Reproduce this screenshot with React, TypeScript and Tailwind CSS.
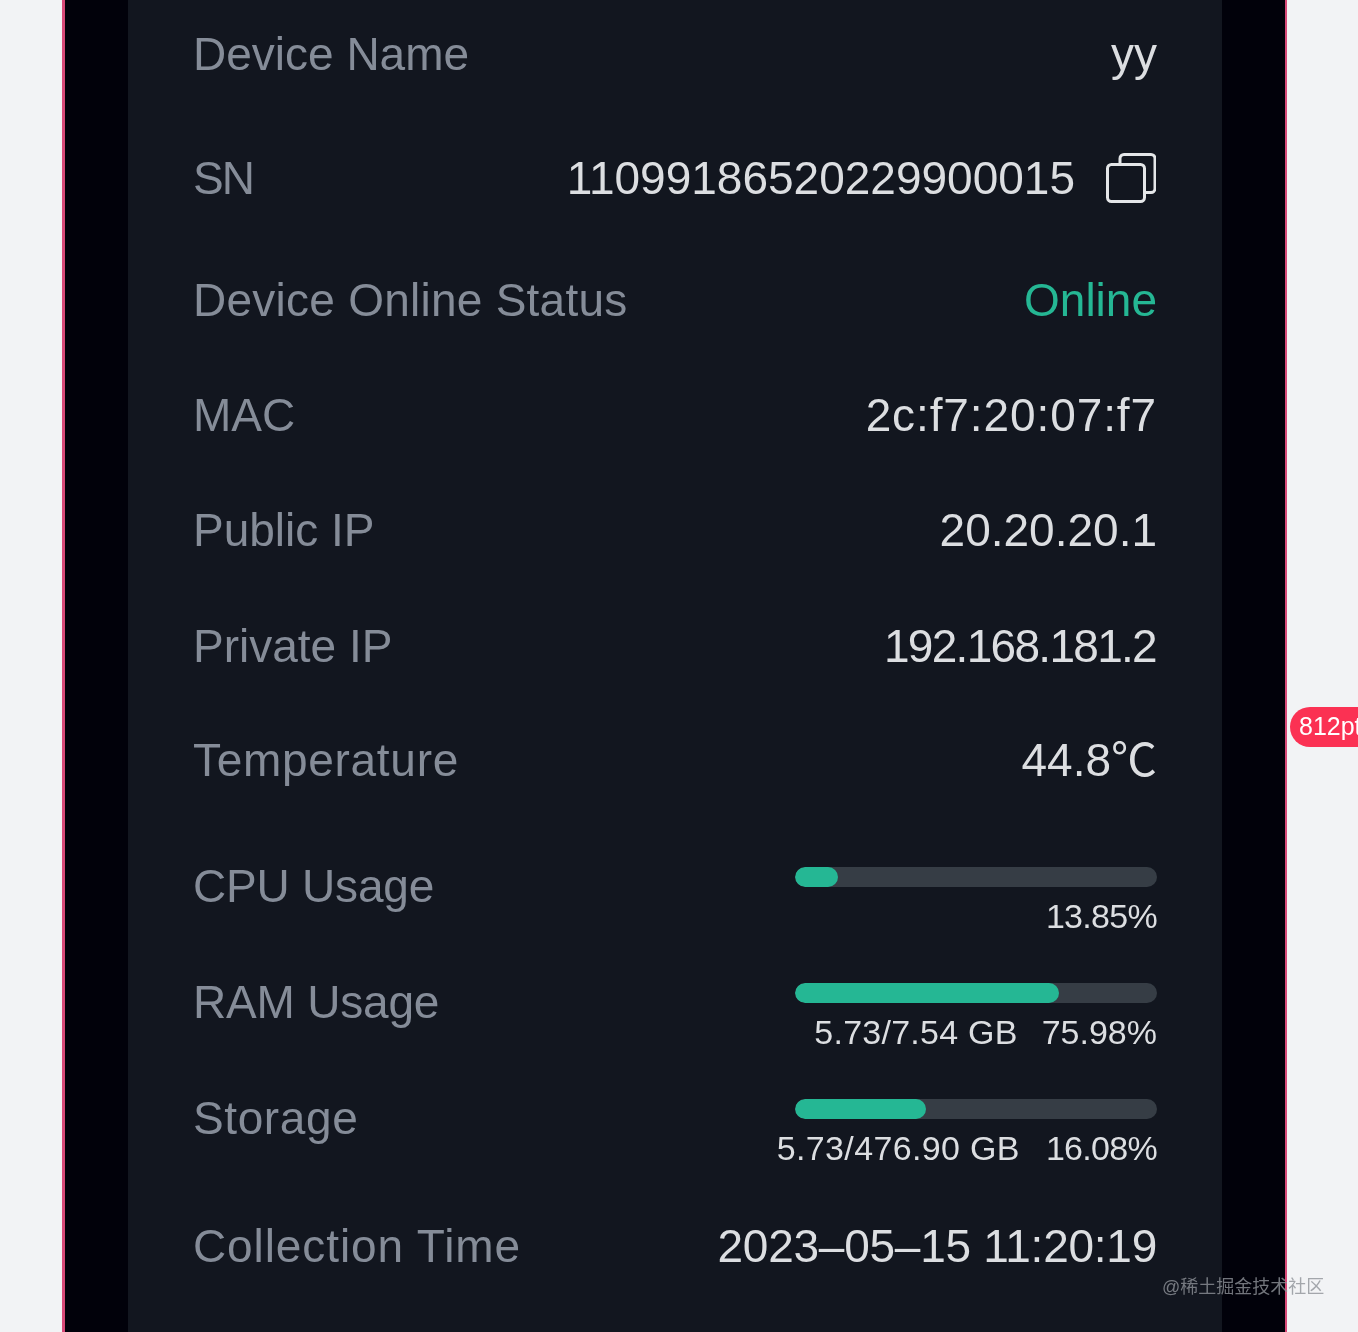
const font = "font-['Liberation_Sans','Noto_Sans_CJK_SC',sans-serif]";

type Row = {
  label: string;
  value: string;
  height: string;
  labelClass?: string;
  valueClass?: string;
  copy?: boolean;
};

const topRows: Row[] = [
  { label: "Device Name", value: "yy", height: "h-[108px]" },
  { label: "SN", value: "11099186520229900015", height: "h-[140px]", labelClass: "tracking-[-2px]", copy: true },
  {
    label: "Device Online Status",
    value: "Online",
    height: "h-[104px]",
    labelClass: "tracking-[0.25px]",
    valueClass: "!text-[#25b794]",
  },
  { label: "MAC", value: "2c:f7:20:07:f7", height: "h-[126px]", valueClass: "tracking-[0.9px]" },
  { label: "Public IP", value: "20.20.20.1", height: "h-[104px]" },
  { label: "Private IP", value: "192.168.181.2", height: "h-[128px]", valueClass: "mr-[1px] tracking-[-1.7px]" },
  { label: "Temperature", value: "44.8℃", height: "h-[100px]", labelClass: "tracking-[0.7px]" },
];

const usageRows = [
  { label: "CPU Usage", labelClass: "tracking-[-0.2px]", percent: 12, detail: "", detailClass: "", value: "13.85%", valueClass: "tracking-[-0.7px]", gap: "gap-[24px]" },
  { label: "RAM Usage", labelClass: "tracking-[-0.2px]", percent: 73, detail: "5.73/7.54 GB", detailClass: "tracking-[0.25px]", value: "75.98%", valueClass: "", gap: "gap-[24px]" },
  { label: "Storage", labelClass: "tracking-[0.6px]", percent: 36.3, detail: "5.73/476.90 GB", detailClass: "tracking-[0.35px]", value: "16.08%", valueClass: "tracking-[-0.7px]", gap: "gap-[26px]" },
];

function CopyIcon() {
  return (
    <svg width="50" height="50" viewBox="0 0 50 50" fill="none" stroke="#e4e6e8" strokeWidth="3" className="mr-[1px] shrink-0">
      <rect x="1.5" y="11.5" width="37" height="37" rx="4" />
      <path d="M14 11V5.5a4 4 0 0 1 4-4h27a4 4 0 0 1 4 4v30a4 4 0 0 1-4 4h-6" />
    </svg>
  );
}

function UsageRow({ label, labelClass, percent, detail, detailClass, value, valueClass, gap }: (typeof usageRows)[number]) {
  return (
    <div className="flex h-[116px] justify-between">
      <span className={`-mt-[7px] text-[46px] leading-[52px] text-[#858c98] ${labelClass}`}>{label}</span>
      <div className="w-[362px]">
        <div className="h-[20px] overflow-hidden rounded-full bg-[#363d45]">
          <div className="h-full rounded-full bg-[#25b794]" style={{ width: `${percent}%` }} />
        </div>
        <div className={`mt-[9px] flex justify-end text-[34px] leading-[40px] whitespace-nowrap text-[#dcdee1] ${gap}`}>
          {detail && <span className={detailClass}>{detail}</span>}
          <span className={valueClass}>{value}</span>
        </div>
      </div>
    </div>
  );
}

export default function App() {
  return (
    <div className={`relative h-[1332px] overflow-hidden bg-[#f2f3f5] blur-[0.5px] ${font}`}>
      <div className="ml-[62px] h-full w-[1225px] border-r-2 border-l-3 border-[#d84a78] bg-[#01010a] px-[63px]">
        <div className="h-full bg-[#12161f] px-[65px]">
          {topRows.map((row) => (
            <div key={row.label} className={`flex items-center justify-between ${row.height}`}>
              <span className={`text-[46px] leading-[52px] text-[#858c98] ${row.labelClass ?? ""}`}>{row.label}</span>
              <div className="flex items-center gap-[31px]">
                <span className={`text-[46px] leading-[52px] text-[#dcdee1] ${row.valueClass ?? ""}`}>{row.value}</span>
                {row.copy && <CopyIcon />}
              </div>
            </div>
          ))}
          <div className="mt-[57px]">
            {usageRows.map((row) => (
              <UsageRow key={row.label} {...row} />
            ))}
          </div>
          <div className="flex h-[62px] items-center justify-between">
            <span className="text-[46px] leading-[52px] tracking-[0.9px] text-[#858c98]">Collection Time</span>
            <span className="text-[46px] leading-[52px] tracking-[-0.25px] text-[#dcdee1]">2023–05–15 11:20:19</span>
          </div>
        </div>
      </div>

      <div className="absolute top-[707px] left-[1290px] flex h-[40px] w-[90px] items-center rounded-[20px] bg-[#fb3153] pl-[9px] text-[25px] text-white">
        812pt
      </div>
      <div className="absolute top-[1275px] left-[1162px] text-[18px] leading-[24px] whitespace-nowrap text-[#8f9299]/80">
        @稀土掘金技术社区
      </div>
    </div>
  );
}
